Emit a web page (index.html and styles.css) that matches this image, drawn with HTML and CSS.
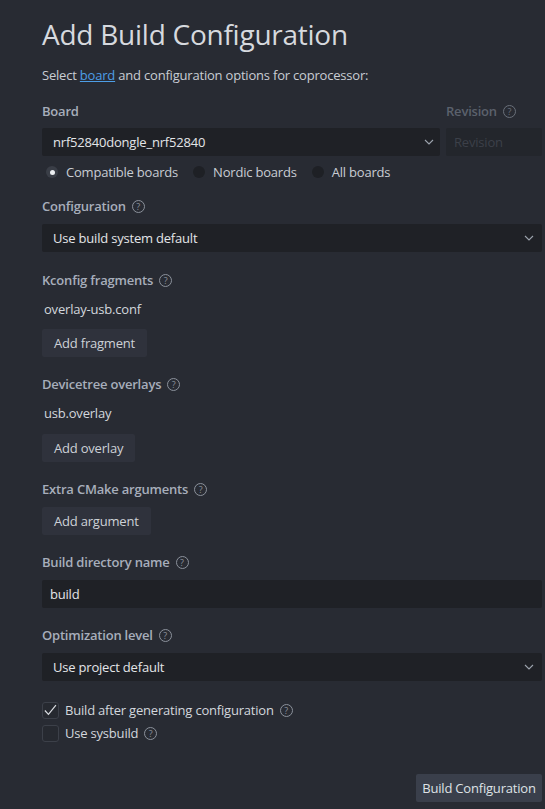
FILE: index.html
```html
<!DOCTYPE html>
<html>
<head>
<meta charset="utf-8">
<link rel="stylesheet" href="styles.css">
</head>
<body>
<main class="page">
  <h1 class="title">Add Build Configuration</h1>
  <p class="intro">Select <a class="link" href="#">board</a> and configuration options for coprocessor:</p>

  <div class="board-row">
    <div class="board-col">
      <div class="label">Board</div>
      <div class="select board-select"><span>nrf52840dongle_nrf52840</span><svg class="chev" viewBox="0 0 10 6" width="10" height="6"><path d="M1 1l4 4 4-4" fill="none" stroke="#9ca3ad" stroke-width="1.1"/></svg></div>
    </div>
    <div class="rev-col">
      <div class="label dim">Revision <span class="help dimhelp">?</span></div>
      <div class="rev-input">Revision</div>
    </div>
  </div>
  <div class="radios">
    <label class="radio"><span class="dot on"></span>Compatible boards</label>
    <label class="radio"><span class="dot"></span>Nordic boards</label>
    <label class="radio"><span class="dot"></span>All boards</label>
  </div>

  <section class="field f-config">
    <div class="label">Configuration <span class="help">?</span></div>
    <div class="select"><span>Use build system default</span><svg class="chev" viewBox="0 0 10 6" width="10" height="6"><path d="M1 1l4 4 4-4" fill="none" stroke="#9ca3ad" stroke-width="1.1"/></svg></div>
  </section>

  <section class="field f-kconfig">
    <div class="label">Kconfig fragments <span class="help">?</span></div>
    <div class="item">overlay-usb.conf</div>
    <button class="btn">Add fragment</button>
  </section>

  <section class="field">
    <div class="label">Devicetree overlays <span class="help">?</span></div>
    <div class="item">usb.overlay</div>
    <button class="btn btn-b">Add overlay</button>
  </section>

  <section class="field">
    <div class="label">Extra CMake arguments <span class="help">?</span></div>
    <button class="btn">Add argument</button>
  </section>

  <section class="field">
    <div class="label">Build directory name <span class="help">?</span></div>
    <div class="text-input">build</div>
  </section>

  <section class="field">
    <div class="label">Optimization level <span class="help">?</span></div>
    <div class="select"><span>Use project default</span><svg class="chev" viewBox="0 0 10 6" width="10" height="6"><path d="M1 1l4 4 4-4" fill="none" stroke="#9ca3ad" stroke-width="1.1"/></svg></div>
  </section>

  <div class="checks">
    <label class="check"><span class="box"><svg viewBox="0 0 16 16" width="16" height="16"><path d="M2 8.5l3.8 4.2 8-10" fill="none" stroke="#d8dbe0" stroke-width="1.3"/></svg></span>Build after generating configuration <span class="help">?</span></label>
    <label class="check"><span class="box"></span>Use sysbuild <span class="help">?</span></label>
  </div>

  <div class="footer">
    <button class="btn btn-primary">Build Configuration</button>
  </div>
</main>
</body>
</html>
```

FILE: styles.css
```css
* { box-sizing: border-box; }
html, body {
  margin: 0;
  padding: 0;
  background: #282b33;
}
body {
  font-family: "Open Sans", "Noto Sans", sans-serif;
  font-size: 13px;
  letter-spacing: -0.2px;
  color: #d3d7dd;
}
.page {
  width: 545px;
  padding: 17px 3px 0 42px;
  display: flex;
  flex-direction: column;
}
.title {
  margin: 0;
  font-size: 28px;
  line-height: 34px;
  font-weight: 400;
  color: #d6d9de;
  letter-spacing: -0.25px;
}
.intro {
  margin: 14px 0 0;
  line-height: 20px;
  color: #c9cdd3;
}
.link { color: #4d9ee6; text-decoration: underline; }
.label {
  display: flex;
  align-items: center;
  gap: 6px;
  height: 20px;
  font-weight: 600;
  color: #a7aebb;
}
.label.dim { color: #5b616c; }
.help {
  display: inline-flex;
  align-items: center;
  justify-content: center;
  width: 13px;
  height: 13px;
  border: 1px solid #8b919b;
  border-radius: 50%;
  font-size: 9px;
  font-weight: 400;
  line-height: 1;
  letter-spacing: 0;
  color: #8b919b;
}
.help.dimhelp { border-color: #6a707a; color: #6a707a; }
.board-row {
  margin-top: 16px;
  display: flex;
  gap: 6px;
}
.board-col { flex: 0 0 398px; display: flex; flex-direction: column; gap: 7px; }
.rev-col { flex: 1; display: flex; flex-direction: column; gap: 7px; }
.select {
  height: 28px;
  background: #1f2126;
  border-radius: 2px;
  display: flex;
  align-items: center;
  justify-content: space-between;
  padding: 0 8px 0 11px;
  color: #e3e5e8;
}
.board-select { padding-right: 6px; }
.chev { display: block; }
.rev-input {
  height: 28px;
  background: #23262c;
  border-radius: 2px;
  display: flex;
  align-items: center;
  padding: 0 8px;
  color: #3c4049;
}
.radios {
  margin-top: 6px;
  height: 20px;
  display: flex;
  align-items: center;
  padding-left: 4px;
  gap: 15px;
}
.radio {
  display: flex;
  align-items: center;
  gap: 8px;
  color: #c9cdd3;
}
.dot {
  width: 12px;
  height: 12px;
  border-radius: 50%;
  background: #1e2025;
  display: flex;
  align-items: center;
  justify-content: center;
}
.dot.on { background: #3a3e47; }
.dot.on::after {
  content: "";
  width: 5px;
  height: 5px;
  border-radius: 50%;
  background: #eceef1;
}
.field {
  margin-top: 17px;
  display: flex;
  flex-direction: column;
  align-items: flex-start;
  gap: 8px;
}
.field .select, .field .text-input { align-self: stretch; }
.f-config { margin-top: 14px; }
.f-kconfig { margin-top: 18px; }
.item {
  line-height: 20px;
  padding-left: 2px;
  margin-top: 1px;
  margin-bottom: 2px;
  color: #d3d7dd;
}
.btn {
  font: inherit;
  letter-spacing: -0.2px;
  height: 28px;
  padding: 0 12px;
  border: none;
  border-radius: 2px;
  background: #2f323c;
  color: #cdd1d7;
}
.btn-b { margin-top: 1px; }
.text-input {
  height: 28px;
  background: #1f2126;
  border-radius: 2px;
  display: flex;
  align-items: center;
  padding: 0 8px;
  color: #e3e5e8;
}
.checks {
  margin-top: 19px;
  display: flex;
  flex-direction: column;
  gap: 3px;
}
.check {
  height: 20px;
  display: flex;
  align-items: center;
  gap: 6px;
  color: #d3d7dd;
}
.check .help { margin-left: 0; }
.box {
  width: 17px;
  height: 17px;
  border: 1px solid #3c4049;
  border-radius: 3px;
  background: #262930;
  display: flex;
  align-items: center;
  justify-content: center;
}
.box svg { display: block; }
.footer {
  margin-top: 31px;
  display: flex;
  justify-content: flex-end;
}
.btn-primary {
  width: 126px;
  padding: 0;
  background: #3a3f4b;
  color: #dfe2e6;
}
```
